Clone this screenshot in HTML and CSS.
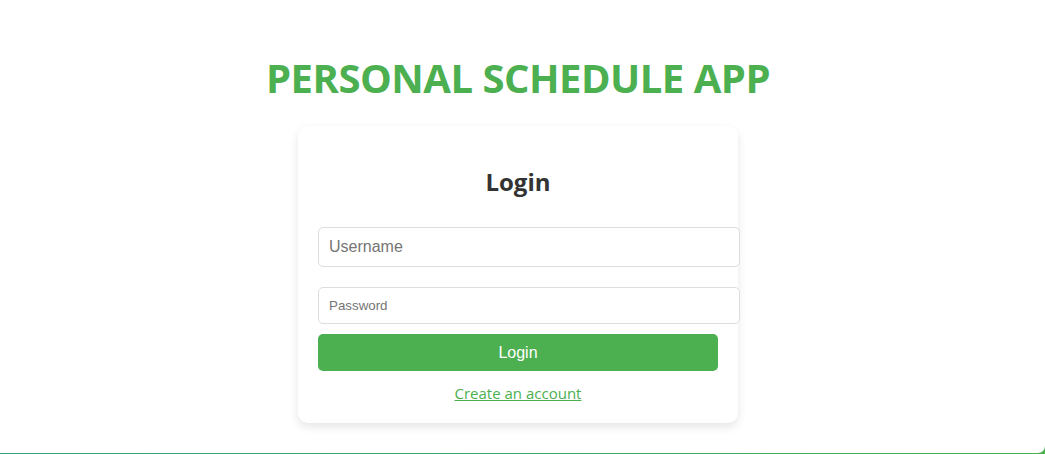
FILE: index.html
```html
<!DOCTYPE html>
<html lang="en">
<head>
<meta charset="utf-8">
<title>Personal Schedule App</title>
<link rel="stylesheet" href="styles.css">
</head>
<body>
<div class="page">
  <h1 class="app-title">PERSONAL SCHEDULE APP</h1>
  <div class="card">
    <h2 class="card-title">Login</h2>
    <form class="login-form">
      <input class="field field-lg" type="text" placeholder="Username">
      <input class="field field-sm" type="password" placeholder="Password">
      <button class="btn" type="button">Login</button>
    </form>
    <p class="signup"><a class="signup-link" href="#">Create an account</a></p>
  </div>
</div>
</body>
</html>
```

FILE: styles.css
```css
html, body {
  margin: 0;
  padding: 0;
}
body {
  background: linear-gradient(90deg, #36a07c 0%, #45a862 60%, #4caf50 100%);
  font-family: "Open Sans", "Noto Sans", sans-serif;
  overflow: hidden;
}
.page {
  background: #ffffff;
  height: 453px;
  box-sizing: border-box;
  border-bottom-right-radius: 7px;
  display: flex;
  flex-direction: column;
  align-items: center;
  padding: 51px 9px 0 0;
}
.app-title {
  margin: 0;
  font-size: 40px;
  line-height: 54px;
  font-weight: 700;
  color: #4caf50;
  letter-spacing: -0.5px;
}
.card {
  margin-top: 21px;
  width: 400px;
  padding: 20px;
  background: #fff;
  border-radius: 10px;
  box-shadow: 0 4px 10px rgba(0, 0, 0, 0.1);
  display: flex;
  flex-direction: column;
  align-items: center;
}
.card-title {
  margin: 20px 0 0;
  font-size: 24px;
  line-height: 32px;
  font-weight: 700;
  color: #333;
}
.login-form {
  align-self: stretch;
  display: flex;
  flex-direction: column;
  margin-top: 29px;
}
.field {
  width: 100%;
  padding: 10px;
  border: 1px solid #ddd;
  border-radius: 5px;
  font-family: "Liberation Sans", Arial, sans-serif;
  color: #333;
  background: #fff;
  outline: none;
  margin: 0;
}
.field::placeholder {
  color: #757575;
}
.field-lg {
  font-size: 16px;
  line-height: 18px;
}
.field-sm {
  margin-top: 20px;
  font-size: 13.33px;
  line-height: 15px;
}
.btn {
  margin-top: 10px;
  width: 100%;
  height: 37px;
  padding: 0;
  border: none;
  border-radius: 5px;
  background: #4caf50;
  color: #fff;
  font-family: "Liberation Sans", Arial, sans-serif;
  font-size: 16px;
  cursor: pointer;
}
.signup {
  margin: 12px 0 0;
  font-size: 15px;
  line-height: 20px;
}
.signup-link {
  color: #4caf50;
  text-decoration: underline;
}
```
